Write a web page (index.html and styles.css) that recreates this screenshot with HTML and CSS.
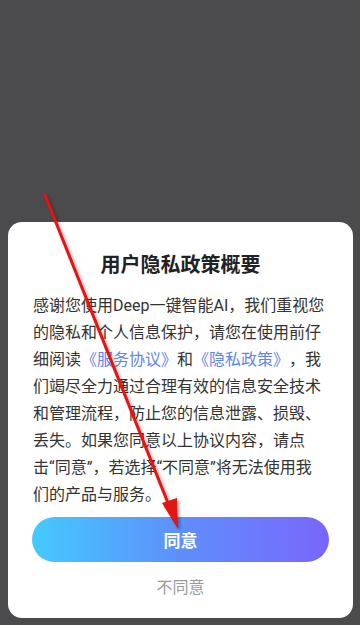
FILE: index.html
```html
<!DOCTYPE html>
<html lang="zh-CN">
<head>
<meta charset="utf-8">
<link rel="stylesheet" href="styles.css">
</head>
<body>
<div class="page">
  <div class="sheet">
    <h1 class="title">用户隐私政策概要</h1>
    <p class="body">感谢您使用Deep一键智能AI，我们重视您的隐私和个人信息保护，请您在使用前仔细阅读<span class="link">《服务协议》</span>和<span class="link">《隐私政策》</span>，我们竭尽全力通过合理有效的信息安全技术和管理流程，防止您的信息泄露、损毁、丢失。如果您同意以上协议内容，请点<br>击“同意”，若选择“不同意”将无法使用我<br>们的产品与服务。</p>
    <button class="agree">同意</button>
    <div class="disagree">不同意</div>
  </div>
</div>
<svg class="arrow" width="360" height="625" viewBox="0 0 360 625">
  <defs>
    <filter id="sh" x="-20%" y="-20%" width="140%" height="140%">
      <feDropShadow dx="2" dy="2" stdDeviation="1.5" flood-color="#000" flood-opacity="0.35"/>
    </filter>
  </defs>
  <g filter="url(#sh)">
    <line x1="45" y1="195" x2="170" y2="508" stroke="#e31212" stroke-width="3" stroke-linecap="round"/>
    <polygon points="178,529 162,503 177,498" fill="#e31212"/>
  </g>
</svg>
</body>
</html>
```
FILE: styles.css
```css
html, body {
  margin: 0;
  padding: 0;
}
body {
  background: #4b4b4d;
  font-family: Roboto, "Noto Sans CJK SC", sans-serif;
  width: 360px;
  height: 625px;
  overflow: hidden;
  position: relative;
  text-spacing-trim: space-all;
}
.page {
  height: 625px;
  display: flex;
  flex-direction: column;
  justify-content: flex-end;
  box-sizing: border-box;
  padding: 0 7px 7px 8px;
}
.sheet {
  background: #fff;
  border-radius: 14px;
  padding: 29px 25px 18px 25px;
  display: flex;
  flex-direction: column;
}
.title {
  margin: 0 0 12.5px 0;
  font-size: 20px;
  line-height: 28px;
  font-weight: 600;
  color: #222;
  text-align: center;
}
.body {
  margin: 0;
  font-size: 16px;
  line-height: 27px;
  color: #333;
  text-spacing-trim: space-all;
  font-feature-settings: "halt" 0, "palt" 0;
}
.link {
  color: #5f84f0;
}
.agree {
  margin: 9.5px -1px 0 -1px;
  height: 45px;
  border: none;
  border-radius: 23px;
  background: linear-gradient(90deg, #45c9fe 0%, #5e8ffb 50%, #7966fb 100%);
  color: #fff;
  font-family: Roboto, "Noto Sans CJK SC", sans-serif;
  font-size: 17px;
  font-weight: 600;
  padding: 0;
}
.disagree {
  margin-top: 14px;
  text-align: center;
  font-size: 16px;
  line-height: 24px;
  color: #9a9a9a;
}
.arrow {
  position: absolute;
  left: 0;
  top: 0;
  pointer-events: none;
}
```
